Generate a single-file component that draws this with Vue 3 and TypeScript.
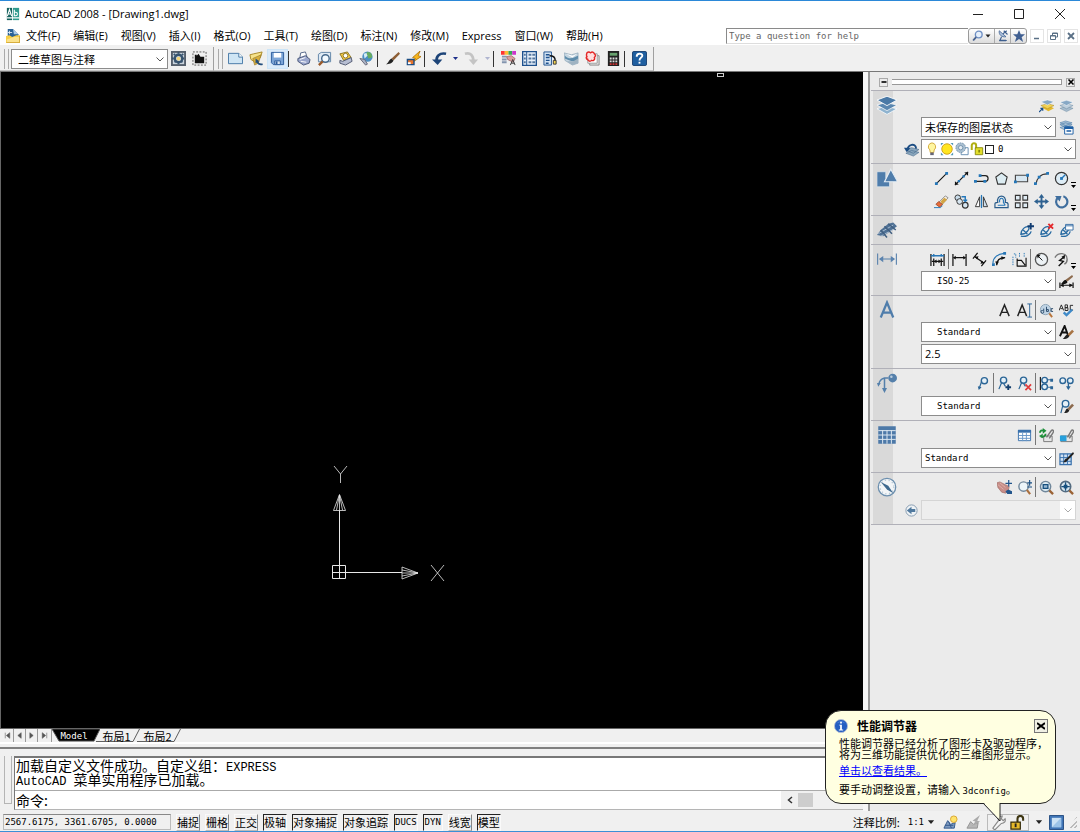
<script setup lang="ts">
import { ref } from 'vue'

interface Tool {
  id: string
  label: string
  sep?: boolean
}

const menus: string[] = [
  '文件(F)', '编辑(E)', '视图(V)', '插入(I)', '格式(O)', '工具(T)',
  '绘图(D)', '标注(N)', '修改(M)', 'Express', '窗口(W)', '帮助(H)',
]

const icons: Record<string, string> = {
  logo: '<path fill="#16635f" d="M1 1h6v14H1z"/><path fill="#2f9a8d" d="M8 1h7v14H8z"/><path stroke="#fff" stroke-width="1.3" fill="none" d="M1.5 10.500L4 3l2.500 7.500M2.500 8H6M9.500 3v7h1.500a2 2 0 0 0 0-4H9.500M1 12.500h14"/>',
  dwg: '<path fill="#2a6296" d="M2 0h6l6 6v4H2z"/><path fill="#a9c9e6" d="M8 0l6 6H9z"/><path stroke="#dfeaf5" d="M4 2v4M2 4h5"/><path fill="#f7cf47" d="M0 8l4-1 3 2 5-2h4v9H0z"/><path fill="#fbe28b" d="M1 12l8-3h6v6H1z"/><path fill="none" stroke="#c0922a" stroke-width=".7" d="M.5 15.500h15V8"/>',
  gear: '<path fill="#555f6c" d="M0 0h16v16H0z"/><path fill="#c9d3dc" d="M2 2h12v12H2z"/><circle cx="8" cy="8" r="4" fill="none" stroke="#37536e" stroke-width="2.500"/><path stroke="#37536e" stroke-width="2" stroke-dasharray="2 9" d="M8 1v14M1 8h14M3 3l10 10M13 3L3 13"/><circle cx="8" cy="8" r="2" fill="#f3d679"/>',
  mywork: '<path fill="none" stroke="#555" stroke-dasharray="2 1.500" d="M1 1h14v14H1z"/><path fill="#111" d="M3 7V4h2v1l2-2 2 3h4v7H3z"/>',
  newdoc: '<path fill="#cfe5f4" stroke="#4577a5" d="M.5 2.500h11l4 4v7H.5z"/><path fill="#fff" stroke="#4577a5" d="M11.500 2.500v4h4"/>',
  open: '<path fill="#f6e28a" stroke="#a98728" d="M1 4l4-1 9-2-2 6-5 5-5-3z"/><path fill="#d6ae3e" stroke="#8f6f1c" stroke-width=".6" d="M4 8l9-4-3 9-4 2z"/><path fill="none" stroke="#234e7d" stroke-width="1.800" d="M14.500 14c-3 1-5-1-6-3"/><path fill="#234e7d" d="M7 13V8l4 3z"/>',
  save: '<path fill="#7ba4d6" stroke="#2b5b9c" d="M1.500 1.500h13v13h-11l-2-2z"/><path fill="#fff" d="M4 2h8v5H4z"/><path fill="#dbe8f6" stroke="#2b5b9c" d="M5 10.500h6v4H5z"/><path fill="#2b5b9c" d="M6 11h2v3H6z"/>',
  print: '<path fill="#fff" stroke="#56698a" d="M4 8l1-6 5-1 2 6"/><path fill="#9aa6cc" stroke="#475577" d="M2 8l8-3 5 4-1 4-6 2-6-4z"/><path fill="none" stroke="#fff" d="M4 9l6-2M5 11l6 1"/>',
  preview: '<path fill="#dfeaf4" stroke="#5f83a6" d="M1.500 3.500l3-2h10v10h-13z"/><circle cx="9" cy="8" r="4" fill="#f3faff" stroke="#46698c" stroke-width="1.500"/><path stroke="#9a5a2a" stroke-width="2.500" d="M6 11l-4 4"/>',
  publish: '<path fill="#f1c946" stroke="#8e7420" d="M2 3l8-2 4 6-8 3z"/><circle cx="8" cy="5" r="2.500" fill="#fff" stroke="#8e7420"/><path fill="#b7bed2" stroke="#4f5870" d="M2 10l3 1 9-4 1 4-7 4-6-2z"/>',
  globe: '<circle cx="9" cy="6" r="5.500" fill="#4a8fc4"/><path fill="#67ac60" d="M9 1c5 0 5 4 5 6l-4 1-1-3-2-2z"/><path fill="#d5ecf8" d="M5 3l3-1 1 3-3 3z"/><path fill="#aab3c6" stroke="#667" d="M1 8l5 1 3 5-2 1z"/>',
  brush: '<path fill="#8d5e35" d="M14.500 1L16 3l-7 7-2-2z"/><path fill="#222" d="M7 8l2 2c-1 3-5 4-8 4 3-1 3-5 6-6z"/>',
  bolt: '<path fill="#f7b61c" stroke="#a56a00" stroke-width=".8" d="M15 0L7 7l3 1-3 4 9-6-3-1z"/><path fill="#e9752c" stroke="#1c4d83" stroke-width="1.500" d="M1.500 9h7v5.500h-7z"/><path fill="#fff" d="M2 12h3v2H2z"/>',
  undo: '<path fill="none" stroke="#1d4478" stroke-width="2.800" d="M5 11C4 6 8 1.500 15 3"/><path fill="#1d4478" d="M0 9h11l-5 6z"/>',
  redo: '<path fill="none" stroke="#c4c4c4" stroke-width="2.800" d="M1 3c6-2 9 2 9 8"/><path fill="#c4c4c4" d="M5 9h10l-5 6z"/>',
  props: '<path fill="#f33" d="M0 0h4v4H0z"/><path fill="#fb3" d="M4 0h4v4H4z"/><path fill="#3a5" d="M8 0h4v4H8z"/><path fill="#c3c" d="M12 0h4v4h-4z"/><path stroke="#8394ae" stroke-width="2" d="M1 6h5M1 9h5M1 12h5"/><path fill="#d9a0a0" stroke="#8e5050" stroke-width=".7" d="M6 6l5-1 4 3-2 4-6-3z"/><path fill="none" stroke="#333" d="M10 15l2.500-6 2.500 6M11 13h3"/>',
  dcenter: '<path fill="#e7f0fa" stroke="#1e518e" stroke-width="1.500" d="M.7.7h14.600v14.600H.7z"/><path fill="none" stroke="#1e518e" d="M5 1v14"/><path fill="#54779f" d="M2 3h2v2H2zM2 7h2v2H2zM2 11h2v2H2zM7 3h3v2H7zM11 3h3v2h-3zM7 7h3v2H7zM11 7h3v2h-3zM7 11h3v2H7zM11 11h3v2h-3z"/>',
  palette: '<path fill="#d4e4f4" stroke="#1e518e" d="M1 1h8v14H1z"/><path stroke="#1e518e" stroke-width="1.500" d="M3 4h4M3 7h4M3 10h4M3 13h3"/><path fill="none" stroke="#111" stroke-width="1.500" d="M7 5c5 0 6 2 6 5"/><path fill="#f1d24e" stroke="#333" d="M11 10h3v4h-3z"/>',
  sheets: '<path fill="#c4d4df" stroke="#8ba3b5" stroke-width=".7" d="M0 2l8 2 7-2v11l-6 2-8-5z"/><path fill="#5e8cab" d="M1 5c5 5 9 2 14 0v4c-5 4-9 1-14-1z"/><path fill="#fff" d="M2 3l7 2 5-2-5 4z"/><path fill="#9fb3c2" d="M3 11l7 0 5-3v5l-6 2z"/>',
  markup: '<path fill="#e7e7e7" stroke="#888" d="M5 5h10v10H5z"/><path fill="#fff" stroke="#999" d="M3 3h10v10H3z"/><path fill="#ffdede" stroke="#e32626" stroke-width="1.500" d="M2 2c2-2 3-1 4 0 2-2 4 0 4 1 2 1 1 3 0 4 1 2-1 4-3 3-2 2-4 0-4-1-2 0-2-3-1-3-1-2 0-3 0-4z"/>',
  calc: '<path fill="#222" d="M2 0h12v16H2z"/><path fill="#67a16d" d="M4 2h8v3H4z"/><path stroke="#ddd" stroke-width="2" stroke-dasharray="2 1" d="M4 8h8M4 11h8"/><path stroke="#c33" stroke-width="2" stroke-dasharray="2 1" d="M4 14h8"/>',
  help: '<rect x=".5" y=".5" width="15" height="15" rx="1.500" fill="#1f5fa0" stroke="#173f70"/><path fill="none" stroke="#fff" stroke-width="2" d="M5 6c0-4 6-4 6-1 0 2-3 2-3 5"/><path fill="#fff" d="M7 11.500h2v2H7z"/>',
  search: '<circle cx="9" cy="6" r="4.500" fill="#e5effb" stroke="#6d8ec3" stroke-width="1.800"/><path stroke="#48628f" stroke-width="2.500" d="M5.500 9.500L1.500 14"/>',
  satellite: '<path fill="#a8bedb" stroke="#3e5f8f" d="M3 1c-1 5 3 9 9 8z"/><path fill="none" stroke="#3e5f8f" stroke-width="1.500" d="M8 5l5-4M9 1l5 5M6 9l-2 5h9"/><path fill="#3e5f8f" d="M3 13h9v2H3z"/>',
  star: '<path fill="#405f91" d="M8 0l2.300 5.500H16L11.500 9.500 13.500 16 8 12l-5.500 4 2-6.500L0 5.500h5.700z"/>',
  layers: '<path fill="#8fb3cf" stroke="#fff" stroke-width=".6" d="M0 11l7-2 9 2-8 4.500z"/><path fill="#5b87b0" stroke="#fff" stroke-width=".6" d="M0 8l7-2 9 2-8 4.500z"/><path fill="#4a79a6" stroke="#fff" stroke-width=".7" d="M0 4l8-3 8 3-8 4.500z"/>',
  layercur: '<path fill="#e4b92d" d="M3 10l7-2 6 3-6 3z"/><path fill="#f2d252" stroke="#a8821c" stroke-width=".5" d="M2 8l7-2 7 2-7 3.500z"/><path fill="#86a8c5" stroke="#fff" stroke-width=".5" d="M2 4l7-2 7 2-7 3.500z"/><path fill="none" stroke="#174f8d" stroke-width="1.300" d="M0 15l4-4M1.500 11H4v2.500"/>',
  layerlight: '<path fill="#a6bccd" stroke="#65859e" stroke-width=".5" d="M1 11l7-2 7 2-7 3.500z"/><path fill="#bfd0dd" stroke="#65859e" stroke-width=".5" d="M1 8l7-2 7 2-7 3.500z"/><path fill="#86a8c5" stroke="#fff" stroke-width=".5" d="M1 4.500l7-2 7 2L8 8z"/>',
  layerstate: '<path fill="#a6c0d6" stroke="#4a7ba8" stroke-width=".6" d="M1 8l6-2 7 2-7 3zM1 5l6-2 7 2-7 3zM1 3l6-2 7 2-7 3z"/><path fill="#fff" stroke="#1d5fa5" d="M6 7.500h9v7.500H6z"/><path fill="#1d5fa5" d="M6 7h9v2.500H6zM8 11h5v1.500H8z"/>',
  layerprev: '<path fill="#89a6bd" stroke="#46688a" stroke-width=".6" d="M2 12l6-3 8 2-6 4zM2 9l6-3 8 2-6 4z"/><path fill="none" stroke="#1c4d83" stroke-width="2" d="M4 8c0-5 8-8 9-1"/><path fill="#1c4d83" d="M0 6h7L3 11z"/>',
  bulb: '<path fill="#fff6a0" stroke="#d0a32f" d="M8 1a4.500 4.500 0 0 1 2.500 8L10 12H6l-.5-3A4.500 4.500 0 0 1 8 1z"/><path fill="#667" d="M6 12h4v3H6z"/>',
  sun: '<path fill="#4f96b6" d="M1 1h3L1 4zM15 1v3l-3-3zM1 15v-3l3 3zM15 15h-3l3-3z"/><circle cx="8" cy="8" r="6" fill="#ffe51f" stroke="#c99a19"/>',
  vpfreeze: '<path fill="#fff" stroke="#5b86ad" d="M7 6.500h8v8H7z"/><circle cx="6.500" cy="6.500" r="5.500" fill="#a9bfd1" stroke="#6d8da8" stroke-dasharray="2 1"/><circle cx="6.500" cy="6.500" r="2.500" fill="#e3ebf1" stroke="#6d8da8"/>',
  lock: '<path fill="none" stroke="#b0ae12" stroke-width="2.300" d="M2 9V4a2.500 2.500 0 0 1 5 0v4"/><path fill="#e3df2b" stroke="#85850a" d="M6 6.500h8.500v8H6z"/><path fill="#85850a" d="M9.500 9h2v3h-2z"/>',
  draw: '<path fill="#4f7dab" stroke="#e4edf5" stroke-width=".5" d="M0 3h7v5l3 3v4H0z"/><path fill="#4f7dab" stroke="#e4edf5" stroke-width=".9" d="M11 1l5.500 10H6z"/>',
  line: '<path stroke="#111" stroke-width="1.200" d="M2 14L14 2"/><path fill="#2477b9" d="M1 12h3v3H1zM12 1h3v3h-3z"/>',
  xline: '<path stroke="#111" stroke-width="1.200" d="M1 15L15 1"/><path fill="#111" d="M15 1v4l-4-3.500zM1 15v-4l4 3.500z"/><path fill="#2477b9" d="M4 9.500h2.500V12H4zM9 4.500h2.500V7H9z"/>',
  pline: '<path fill="none" stroke="#222" stroke-width="1.300" d="M2 11h10a3 3 0 0 0 0-6H7"/><path fill="#2477b9" d="M0 9.500h3v3H0zM10 9.500h3v3h-3zM5 3.500h3v3H5z"/>',
  polygon: '<path fill="#dcecf2" stroke="#333" stroke-width="1.200" d="M8 2l6 4.500L12 14H4L2 6.500z"/>',
  rect: '<path fill="#d8e7f1" stroke="#444" stroke-width="1.200" d="M1.500 4.500h13v7h-13z"/><path fill="#2477b9" d="M0 10h3v3H0zM13 3h3v3h-3z"/>',
  arc: '<path fill="none" stroke="#333" stroke-width="1.200" d="M2 14C3 8 7 3 14 3"/><path fill="#2477b9" d="M0 12h3v3H0zM4 5h3v3H4zM13 1h3v3h-3z"/>',
  circle: '<circle cx="8" cy="8" r="6.500" fill="#deedf6" stroke="#333" stroke-width="1.300"/><path stroke="#2477b9" stroke-width="1.500" d="M8 8l4-4"/><path fill="#2477b9" d="M6.500 6.500h3v3h-3z"/>',
  erase: '<path fill="#f5eee3" stroke="#777" stroke-width=".8" d="M5 9l7-7 3 2-8 9z"/><path fill="#d2a544" d="M7 8l4-4 3 2-5 5z"/><path fill="#e86c3a" stroke="#8d4327" stroke-width=".8" d="M2 11l3-3 4 3-3 3z"/><path fill="none" stroke="#2477b9" d="M0 14.500h7l2-2"/>',
  copy: '<circle cx="4" cy="4" r="3" fill="#c9dcea" stroke="#333"/><circle cx="6" cy="8" r="3" fill="#d7e6f1" stroke="#333"/><circle cx="12" cy="12" r="3" fill="#d7e6f1" stroke="#333" stroke-width="1.300"/><path fill="none" stroke="#2477b9" stroke-width="1.500" d="M8 3h4v4M10 6l2 2 2-2"/>',
  mirror: '<path fill="#fff" stroke="#333" d="M1.500 13.500L6 3v10.500z"/><path fill="#cde0ef" stroke="#333" d="M14.500 13.500L10 3v10.500z"/><path stroke="#2477b9" stroke-width="1.300" d="M8 1v14"/>',
  offset: '<path fill="none" stroke="#2b5d8b" stroke-width="1.300" d="M1 14.500h14V11c0-2-2-2-3-2 2-9-10-9-8 0-3 0-3 1-3 2z"/><path fill="none" stroke="#2477b9" stroke-width="1.200" d="M4 12h8M6 9c-1-6 5-6 4 0l2 3"/>',
  array: '<path fill="#dfebf3" stroke="#333" stroke-width="1.200" d="M1.500 1.500h5v5h-5zM9.500 1.500h5v5h-5zM1.500 9.500h5v5h-5zM9.500 9.500h5v5h-5z"/>',
  move: '<path stroke="#2e6190" stroke-width="2" d="M8 3v10M3 8h10"/><path fill="#2e6190" d="M8 0l3 4H5zM8 16l-3-4h6zM0 8l4-3v6zM16 8l-4 3V5z"/>',
  rotate: '<path fill="none" stroke="#3f6e9e" stroke-width="2.300" d="M10 2.500A6 6 0 1 1 4 4"/><path fill="#3f6e9e" d="M1 2h7l-2 6z"/>',
  blocks: '<path fill="#4f7195" d="M0 12l3-4 6-5 4-1 3 3-4 3-7 5z"/><path stroke="#a9bdd0" stroke-width=".8" d="M1 11l12-7M3 13l11-6"/><path stroke="#405f80" stroke-width="1.200" d="M6 5l6 6M9 3l6 5M3 8l5 6"/>',
  attadd: '<path fill="none" stroke="#286ba2" stroke-width="1.400" d="M2 12c0-5 5-9 8-8 2 2-2 8-8 8zm0 2c5 1 10-1 11-5M4 7l5 5"/><path stroke="#123d72" stroke-width="2" d="M12.500 0v7M9 3.500h7"/>',
  attdel: '<path fill="none" stroke="#286ba2" stroke-width="1.400" d="M2 12c0-5 5-9 8-8 2 2-2 8-8 8zm0 2c5 1 10-1 11-5M4 7l5 5"/><path stroke="#e3282b" stroke-width="2" d="M10 1l5 5M15 1l-5 5"/>',
  attedit: '<path fill="none" stroke="#286ba2" stroke-width="1.400" d="M2 12c0-5 5-9 8-8 2 2-2 8-8 8zm0 2c5 1 9-1 10-5M4 7l5 5"/><path fill="#fff" stroke="#396fa5" d="M7 1.500h8v6H7z"/><path stroke="#396fa5" d="M7 3h8"/>',
  dim: '<path fill="none" stroke="#5b83ae" stroke-width=".9" d="M.5 3.500v9M15.500 3.500v9M3 8h10"/><path fill="#5b83ae" d="M1.500 8L5 5.500v5zM14.500 8L11 10.500v-5z"/>',
  dimquick: '<path stroke="#111" stroke-width="1.300" d="M1 2v13M15 2v13M4 7v8M12 7v8M2 10h12"/><path stroke="#2977b6" stroke-width="1.500" d="M1 4h14M4 2v3M12 2v3"/><path fill="#111" d="M4 10l3-2v4zM12 10l-3 2V8z"/>',
  dimlin: '<path stroke="#111" stroke-width="1.300" d="M1 2v13M15 2v13M2 6h12"/><path fill="#111" d="M1 6l3-2v4zM15 6l-3 2V4z"/>',
  dimali: '<path fill="none" stroke="#111" stroke-width="1.300" d="M3 5l10 7M1 7l5-6M10 15l5-6"/><path fill="#111" d="M3 5l4-.5L5.500 8zM13 12l-4 .5L10.500 9z"/>',
  dimarc: '<path fill="none" stroke="#111" stroke-width="1.300" d="M5 14c0-5 3-8 9-8"/><path fill="none" stroke="#2977b6" stroke-width="1.200" d="M1 12C1 6 6 2 13 1.500"/><path fill="#2977b6" d="M12 0h3v3h-3zM0 12h3v3H0z"/><path fill="#111" d="M14 6l-4-1.500v4zM5 14L3.500 10h4z"/>',
  dimord: '<path fill="none" stroke="#111" stroke-width="1.200" d="M5 15h10V6M5.500 15V7M6 9h4l4 5"/><path fill="none" stroke="#2977b6" stroke-dasharray="1.500 1" d="M1 5v10M2 2h2v4M8 1v4M13 1v4"/>',
  radius: '<circle cx="8" cy="8" r="6.500" fill="#edf2f5" stroke="#555" stroke-width="1.400"/><path stroke="#111" d="M9 9L4 4"/><path fill="#111" d="M3 3h4L4 7z"/>',
  jog: '<path fill="none" stroke="#777" stroke-width="1.500" d="M1 6C4 0 14 0 14 8c0 2-1 4-3 5"/><path fill="none" stroke="#111" stroke-width="1.500" d="M11 5L6 9l4 1-5 5"/><path fill="#111" d="M12 3l-1 5-3-3z"/>',
  dimstyle: '<path stroke="#111" stroke-width="1.300" d="M1 9v6M15 9v6M2 12h12"/><path fill="#111" d="M1 12l4-2v4zM15 12l-4 2v-4zM2 10c2 0 2-4 6-4l1 3c-2 2-5 2-7 1z"/><path fill="#8d6b4e" d="M14 1l1 2-6 5-2-2z"/>',
  bigA: '<path fill="none" stroke="#4f7dab" stroke-width="1.800" d="M3 14L8 2l5 12M4.500 10h7"/>',
  textA: '<path fill="none" stroke="#222" stroke-width="1.500" d="M3 14L8 2l5 12M4.500 10h7"/>',
  textAI: '<path fill="none" stroke="#222" stroke-width="1.500" d="M.7 14L5.500 2l4.800 12M2.500 10h6"/><path fill="none" stroke="#2b6398" d="M11 1h5M13.500 1v14M11 15h5"/>',
  find: '<circle cx="7" cy="7" r="5.500" fill="#bfd3e4" stroke="#8ba1b4"/><path fill="none" stroke="#29496a" d="M4 8a1.500 1.500 0 1 0 1 1V6M8 4v5h2V7H8M15 6h-2v3h2"/><path stroke="#b8743a" stroke-width="2" d="M11 11l3 4"/>',
  spell: '<path fill="none" stroke="#222" d="M0 8l2.500-6L5 8M1.500 6h2.500M6.500 2v6h3V5h-3 2.500V2H6.500M15 2.500h-3v5h3"/><path fill="none" stroke="#3f8ac8" stroke-width="2.500" d="M5 10l3 3 6-6"/>',
  textstyle: '<path fill="none" stroke="#111" stroke-width="2" d="M1 12L6 1l4 11M3 8h6"/><path fill="#a77343" d="M14 5l2 2-5 5-2-2z"/><path fill="#222" d="M9 10l2 2c-2 3-5 3-7 3 2-2 3-5 5-5z"/>',
  leaderBig: '<circle cx="12.500" cy="4" r="3.500" fill="#5580ab"/><circle cx="11.500" cy="3" r="1" fill="#bcd"/><path fill="none" stroke="#5580ab" stroke-width="1.200" d="M9 4H6Q2 5 1.500 9M6 4v10"/><path fill="#5580ab" d="M0 8h3l-2 3zM4 12h4l-2 4z"/>',
  leader: '<circle cx="10" cy="5" r="3.300" fill="#e5f0f7" stroke="#2b6596" stroke-width="1.500"/><path fill="none" stroke="#2b6596" stroke-width="1.300" d="M7 6L4.500 13"/><path fill="#2b6596" d="M3 11l4 1-3 3z"/>',
  leaderadd: '<circle cx="7" cy="4.500" r="3.300" fill="#e5f0f7" stroke="#2b6596" stroke-width="1.500"/><path fill="none" stroke="#2b6596" stroke-width="1.300" d="M5 7l-3 7M7 8l2 3"/><path stroke="#143f6d" stroke-width="2" d="M12 9v6M9 12h6"/>',
  leaderdel: '<circle cx="7" cy="4.500" r="3.300" fill="#e5f0f7" stroke="#2b6596" stroke-width="1.500"/><path fill="none" stroke="#2b6596" stroke-width="1.300" d="M5 7l-3 7M7 8l2 3"/><path stroke="#e13b3b" stroke-width="1.800" d="M9 9l6 6M15 9l-6 6"/>',
  leaderalign: '<path stroke="#222" stroke-width="1.300" d="M1.500 1v14"/><circle cx="6" cy="4.500" r="3" fill="#e5f0f7" stroke="#2b6596" stroke-width="1.500"/><circle cx="6" cy="11.500" r="3" fill="#e5f0f7" stroke="#2b6596" stroke-width="1.500"/><path stroke="#2b6596" d="M9 4h5M9 12h5"/><path fill="#2b6596" d="M12 3h3v3h-3zM12 11h3v3h-3z"/>',
  leadercol: '<circle cx="4" cy="5" r="3" fill="#e5f0f7" stroke="#2b6596" stroke-width="1.500"/><circle cx="12" cy="5" r="3" fill="#e5f0f7" stroke="#2b6596" stroke-width="1.500"/><path stroke="#2b6596" stroke-width="1.400" d="M10 8v6"/><path fill="#2b6596" d="M7.500 11h5L10 15z"/>',
  leaderstyle: '<circle cx="7" cy="5" r="3.500" fill="#e5f0f7" stroke="#2b6596" stroke-width="1.500"/><path stroke="#2b6596" stroke-width="1.300" d="M4 7l-2 8"/><path fill="#8d6b4e" d="M14 5l2 2-5 5-2-2z"/><path fill="#222" d="M9 10l2 2c-1 3-4 3-6 3 2-1 2-5 4-5z"/>',
  tableBig: '<path fill="#4d79a8" d="M1 1h14v14H1z"/><path stroke="#dbe6f0" stroke-width=".8" d="M1 4.500h14M1 8h14M1 11.500h14M4.500 4v11M8 4v11M11.500 4v11"/>',
  table: '<path fill="#fff" stroke="#3971ad" d="M1.500 2.500h13v11h-13z"/><path fill="#3971ad" d="M1 2h14v3H1z"/><path stroke="#6a98c9" d="M2 8h12M2 11h12M6 5v9M10 5v9"/>',
  linkupd: '<path fill="#e6e6e6" stroke="#777" d="M5 8.500h9v6H5z"/><path fill="none" stroke="#777" stroke-width="1.500" d="M8 10l5-7c2-2 3 0 2 2l-4 6"/><path fill="none" stroke="#1e8f3a" stroke-width="2" d="M1 5c0-2 2-3 4-2M2 9c2 1 5 0 5-3"/><path fill="#1e8f3a" d="M4 0l4 3-4 3zM4 6v5L0 8.500z"/>',
  linkdl: '<path fill="#e6e6e6" stroke="#777" d="M2 8.500h12v6H2z"/><path fill="#27a0dc" d="M1 8h7v6H1z"/><path fill="none" stroke="#777" stroke-width="1.500" d="M9 10l4-7c2-2 3 0 2 2l-4 6"/>',
  tablestyle: '<path fill="#cfe0f2" stroke="#3971ad" stroke-width="1.300" d="M1 3h12v11.500H1z"/><path stroke="#3971ad" d="M1 7h12M1 11h12M5 3v11M9 3v11"/><path fill="#222" d="M15 1l1 2-7 7c-1 2-3 2-5 2 2-1 2-4 4-4z"/>',
  compass: '<circle cx="8" cy="8" r="7" fill="#f2f5f7" stroke="#6c8fae"/><circle cx="8" cy="8" r="5.500" fill="none" stroke="#b6c7d5" stroke-dasharray="1 2"/><path fill="#3e698f" d="M3 4l6 3 4 6-5-3z"/>',
  pan: '<path fill="#c78d88" stroke="#976059" stroke-width=".6" d="M0 3l3-1 6 3 4 2-1 5-3 2-4-1-4-5z"/><path stroke="#deb0aa" d="M1 5l6 5M3 3l6 5"/><path stroke="#22558c" stroke-width="1.300" d="M12.500 0v7M9 3.500h7"/><path fill="#22558c" d="M9 12l3-2 4 2v3h-5z"/>',
  zoomrt: '<circle cx="7" cy="7" r="5" fill="#edf5f9" stroke="#70879b" stroke-width="1.500"/><path stroke="#aa7040" stroke-width="2.300" d="M10.500 10.500L14 15"/><path stroke="#174e83" stroke-width="1.200" d="M11 3h5M13.500 0v6M11 7.500h5"/>',
  zoomwin: '<circle cx="7" cy="7" r="5.500" fill="#dceaf1" stroke="#70879b" stroke-width="1.500"/><path fill="#99b8d2" stroke="#17507f" stroke-width="1.400" d="M4.500 5h5v4h-5z"/><path stroke="#9b6336" stroke-width="2.500" d="M11 11l4 4"/>',
  zoomext: '<circle cx="7" cy="7" r="5.500" fill="#dceaf1" stroke="#536b80" stroke-width="1.700"/><path stroke="#17507f" stroke-width="1.400" d="M7 2.500v9M2.500 7h9"/><path fill="#17507f" d="M5 5h4v4H5z"/><path stroke="#9b6336" stroke-width="2.500" d="M11 11l4 4"/>',
  back: '<circle cx="8" cy="8" r="6" fill="#eef2f5" stroke="#8299ae"/><path fill="#50799e" d="M3 8l5-4v2.500h4v3H8V12z"/>',
  annvis: '<path fill="#7e9bc0" stroke="#32588c" d="M1 14l4-8 3 4 5-2-1 6z"/><path fill="none" stroke="#32588c" d="M2 11h9M6 7l3 7"/><circle cx="11.500" cy="4.500" r="3.500" fill="#ffe36b" stroke="#d6a431"/>',
  annauto: '<path fill="#b7b7b7" stroke="#929292" d="M1 14l4-7 3 3 5-2-1 6z"/><path fill="#aaa" d="M15 0L7 6l3 1-4 5 9-5-3-1z"/>',
  wrench: '<path fill="#f5f5f5" stroke="#888" stroke-width="1.200" d="M2 14l6-8c-1-3 1-5 4-5l-1 3 2 2 2-2c1 3-1 5-4 5l-7 7z"/>',
  padlock: '<path fill="none" stroke="#3d3510" stroke-width="2.200" d="M8 8V4c0-4 6-4 6 0v2"/><path fill="#e5b92b" stroke="#342c0b" stroke-width="1.300" d="M1 7.500h10v7.500H1z"/><path fill="#222" d="M5 9h2v4H5z"/>',
  clean: '<path fill="#3f75b7" stroke="#234b80" d="M.5.5h15v15H.5z"/><path fill="#cce2f5" d="M3 3h10v10H3z"/><path fill="#9cc3e8" d="M3 13L13 3v10z"/>',
  info: '<circle cx="8" cy="8" r="7.500" fill="#245ec2" stroke="#b6bfd2"/><path fill="#7ba6ee" d="M3 5a6 5 0 0 1 10 0 8 6 0 0 0-10 0z"/><path fill="#fff" d="M7 3h2v2H7zM6 6.500h3V12h1.500v1h-5v-1H7V7.500H6z"/>',
  tiny: '<path fill="#222" d="M3 5h10l-5 6z"/>',
}

const fileTools: Tool[][] = [
  [
    { id: 'newdoc', label: '新建' },
    { id: 'open', label: '打开' },
    { id: 'save', label: '保存' },
  ],
  [
    { id: 'print', label: '打印' },
    { id: 'preview', label: '打印预览' },
    { id: 'publish', label: '发布' },
    { id: 'globe', label: '三维 DWF' },
  ],
  [
    { id: 'brush', label: '特性匹配' },
    { id: 'bolt', label: '块编辑器' },
  ],
  [
    { id: 'undo', label: '放弃' },
    { id: 'redo', label: '重做' },
  ],
  [
    { id: 'props', label: '特性' },
    { id: 'dcenter', label: '设计中心' },
    { id: 'palette', label: '工具选项板' },
    { id: 'sheets', label: '图纸集管理器' },
    { id: 'markup', label: '标记集管理器' },
    { id: 'calc', label: '快速计算器' },
  ],
  [{ id: 'help', label: '帮助' }],
]

interface Panel {
  id: string
  emblem: string
  tight?: boolean
  rows: { more?: boolean; tools: Tool[] }[]
}

const t = (id: string, label: string, sep = false): Tool => ({ id, label, sep })

const panels: Panel[] = [
  { id: 'layer', emblem: 'layers', tight: true, rows: [{ tools: [t('layercur', '置为当前'), t('layerlight', '图层特性')] }] },
  {
    id: 'draw',
    emblem: 'draw',
    rows: [
      { more: true, tools: [t('line', '直线'), t('xline', '构造线'), t('pline', '多段线'), t('polygon', '正多边形'), t('rect', '矩形'), t('arc', '圆弧'), t('circle', '圆')] },
      { more: true, tools: [t('erase', '删除'), t('copy', '复制'), t('mirror', '镜像'), t('offset', '偏移'), t('array', '阵列'), t('move', '移动'), t('rotate', '旋转')] },
    ],
  },
  { id: 'scale', emblem: 'blocks', rows: [{ tools: [t('attadd', '添加比例'), t('attdel', '删除比例'), t('attedit', '编辑比例')] }] },
  {
    id: 'dim',
    emblem: 'dim',
    tight: true,
    rows: [{ more: true, tools: [t('dimquick', '快速标注'), t('dimlin', '线性', true), t('dimali', '对齐'), t('dimarc', '弧长'), t('dimord', '坐标'), t('radius', '半径', true), t('jog', '折弯')] }],
  },
  { id: 'text', emblem: 'bigA', tight: true, rows: [{ tools: [t('textA', '单行文字'), t('textAI', '多行文字'), t('find', '查找', true), t('spell', '拼写检查')] }] },
  { id: 'leader', emblem: 'leaderBig', rows: [{ tools: [t('leader', '多重引线'), t('leaderadd', '添加引线', true), t('leaderdel', '删除引线'), t('leaderalign', '对齐', true), t('leadercol', '合并')] }] },
  { id: 'table', emblem: 'tableBig', rows: [{ tools: [t('table', '表格'), t('linkupd', '更新数据链接', true), t('linkdl', '数据链接')] }] },
  { id: 'nav', emblem: 'compass', rows: [{ tools: [t('pan', '平移'), t('zoomrt', '实时缩放'), t('zoomwin', '窗口缩放', true), t('zoomext', '范围缩放')] }] },
]

const styleCombos: Record<string, { value: string; icon: string; indent: boolean }> = {
  dim: { value: 'ISO-25', icon: 'dimstyle', indent: true },
  text: { value: 'Standard', icon: 'textstyle', indent: true },
  leader: { value: 'Standard', icon: 'leaderstyle', indent: true },
  table: { value: 'Standard', icon: 'tablestyle', indent: false },
}

const toggles = ref([
  { name: '捕捉', on: false },
  { name: '栅格', on: false },
  { name: '正交', on: false },
  { name: '极轴', on: true },
  { name: '对象捕捉', on: true },
  { name: '对象追踪', on: true },
  { name: 'DUCS', on: true },
  { name: 'DYN', on: true },
  { name: '线宽', on: false },
  { name: '模型', on: true },
])

const navs: string[] = [
  'M4 3v10M12 3L6 8l6 5z',
  'M11 3L5 8l6 5z',
  'M5 3l6 5-6 5z',
  'M12 3v10M4 3l6 5-6 5z',
]

const query = ref('')
const command = ref('')
const balloonOpen = ref(true)
</script>

<template>
  <div class="window">
    <header class="titlebar">
      <svg class="ic" viewBox="0 0 16 16" aria-hidden="true" v-html="icons.logo"></svg>
      <h1>AutoCAD 2008 - [Drawing1.dwg]</h1>
      <div class="caption">
        <button aria-label="最小化"><svg viewBox="0 0 10 10"><path d="M0 5.500h10" /></svg></button>
        <button aria-label="最大化"><svg viewBox="0 0 10 10"><path d="M.5.5h9v9h-9z" /></svg></button>
        <button aria-label="关闭"><svg viewBox="0 0 10 10"><path d="M0 0l10 10M10 0L0 10" /></svg></button>
      </div>
    </header>

    <div class="menubar">
      <svg class="ic" viewBox="0 0 16 16" aria-hidden="true" v-html="icons.dwg"></svg>
      <nav class="menus">
        <button v-for="m in menus" :key="m">{{ m }}</button>
      </nav>
      <input v-model="query" class="ask" type="text" placeholder="Type a question for help" aria-label="帮助搜索" />
      <div class="infocenter">
        <button class="wide" aria-label="搜索">
          <svg class="ic" viewBox="0 0 16 16" v-html="icons.search"></svg>
          <svg class="drop" viewBox="0 0 16 16" v-html="icons.tiny"></svg>
        </button>
        <button aria-label="通讯中心"><svg class="ic" viewBox="0 0 16 16" v-html="icons.satellite"></svg></button>
        <button aria-label="收藏夹"><svg class="ic" viewBox="0 0 16 16" v-html="icons.star"></svg></button>
      </div>
      <div class="mdi">
        <button aria-label="最小化图形"><svg viewBox="0 0 8 8"><path stroke-width="1.500" d="M1 6.500h5" /></svg></button>
        <button aria-label="还原图形"><svg viewBox="0 0 8 8"><path d="M2.500 3V1h5v4h-2M.5 3.500h5v4h-5zM.5 4h5M2.500 1.500h5" /></svg></button>
        <button aria-label="关闭图形"><svg viewBox="0 0 8 8"><path stroke-width="1.800" d="M1 1l6 6M7 1L1 7" /></svg></button>
      </div>
    </div>

    <div class="toolbars">
      <div class="bar">
        <span class="grip"></span>
        <div class="combo workspace">
          <select aria-label="工作空间"><option>二维草图与注释</option></select>
          <svg class="chev" viewBox="0 0 8 5"><path d="M.5.5L4 4 7.500.5" /></svg>
        </div>
        <button class="tool" aria-label="工作空间设置"><svg class="ic" viewBox="0 0 16 16" v-html="icons.gear"></svg></button>
        <button class="tool" aria-label="我的工作空间"><svg class="ic" viewBox="0 0 16 16" v-html="icons.mywork"></svg></button>
      </div>
      <div class="bar">
        <span class="grip"></span>
        <div v-for="(group, i) in fileTools" :key="i" class="group">
          <template v-for="tool in group" :key="tool.id">
            <button class="tool" :class="{ hot: tool.id === 'save' }" :aria-label="tool.label">
              <svg class="ic" viewBox="0 0 16 16" v-html="icons[tool.id]"></svg>
            </button>
            <button v-if="i === 3" class="tool-drop" :class="{ dim: tool.id === 'redo' }" :aria-label="tool.label + '列表'">
              <svg viewBox="0 0 5 3"><path d="M0 0h5L2.500 3z" /></svg>
            </button>
          </template>
        </div>
      </div>
    </div>

    <div class="workspace-area">
      <main class="left">
        <div class="canvas">
          <span class="handle"></span>
          <svg class="ucs" viewBox="0 0 114 118" aria-label="UCS">
            <g fill="none" stroke="#e8e8e8">
              <path d="M1.500 101.500h13v13h-13zM8.500 46v69M1 108.500h70" />
              <path stroke-width=".8" d="M8.500 30.500L2.500 46.500h12zM8.500 31L5.500 46M8.500 31v15M8.500 31l3 15M87 109l-16-6v12zM87 109l-16-3M87 109H71M87 109l-16 3" />
              <path stroke-width=".8" d="M3 2l6.500 8L16 2M9.500 10v9M100 101l13 16M113 101l-13 16" />
            </g>
          </svg>
        </div>
        <div class="tabs">
          <div class="tab-nav">
            <button v-for="(d, i) in navs" :key="i" :aria-label="'布局导航 ' + (i + 1)">
              <svg viewBox="0 0 16 16"><path :d="d" /></svg>
            </button>
          </div>
          <button class="tab active">
            <svg viewBox="0 0 48 14" preserveAspectRatio="none"><path d="M0 0h48l-6 13H7z" /></svg>
            <span class="mono">Model</span>
          </button>
          <button class="tab"><svg viewBox="0 0 48 14" preserveAspectRatio="none"><path d="M0 13.500h37L43.500 0" /></svg><span>布局1</span></button>
          <button class="tab"><svg viewBox="0 0 48 14" preserveAspectRatio="none"><path d="M0 13.500h37L43.500 0" /></svg><span>布局2</span></button>
        </div>
        <section class="command">
          <span class="cmd-grip"></span>
          <div class="cmd-box">
            <div class="history">
              <p><span>加载自定义文件成功。自定义组：</span><span class="cour">EXPRESS</span></p>
              <p><span class="cour">AutoCAD&nbsp;</span><span>菜单实用程序已加载。</span></p>
            </div>
            <div class="prompt">
              <label for="cmd">命令:</label>
              <input id="cmd" v-model="command" type="text" />
              <div class="hscroll">
                <button aria-label="向左滚动"><svg viewBox="0 0 6 8"><path d="M5 1L1.500 4 5 7" /></svg></button>
                <span class="thumb"></span>
              </div>
            </div>
          </div>
        </section>
      </main>

      <aside class="dock">
        <div class="dock-head">
          <button aria-label="最小化面板"><svg viewBox="0 0 8 8"><path d="M1.500 4h5" /></svg></button>
          <span class="rails"></span>
          <button aria-label="关闭面板"><svg viewBox="0 0 8 8"><path d="M1.500 1.500l5 5M6.500 1.500l-5 5" /></svg></button>
        </div>
        <section v-for="p in panels" :key="p.id" class="panel" :class="{ tight: p.tight }">
          <svg class="emblem" viewBox="0 0 16 16" aria-hidden="true" v-html="icons[p.emblem]"></svg>
          <div class="panel-body">
            <div v-for="(row, i) in p.rows" :key="i" class="row">
              <button v-for="tool in row.tools" :key="tool.id" class="cell" :class="{ sep: tool.sep }" :aria-label="tool.label">
                <svg class="ic" viewBox="0 0 16 16" v-html="icons[tool.id]"></svg>
              </button>
              <button v-if="row.more" class="more" aria-label="更多"><svg viewBox="0 0 5 6"><path d="M0 0h5v1H0zM0 3h5L2.500 6z" /></svg></button>
            </div>

            <template v-if="p.id === 'layer'">
              <div class="row">
                <div class="combo short">
                  <select aria-label="图层状态"><option>未保存的图层状态</option></select>
                  <svg class="chev" viewBox="0 0 8 5"><path d="M.5.5L4 4 7.500.5" /></svg>
                </div>
                <button class="cell" aria-label="图层状态管理器"><svg class="ic" viewBox="0 0 16 16" v-html="icons.layerstate"></svg></button>
              </div>
              <div class="row">
                <button class="cell" aria-label="上一个图层"><svg class="ic" viewBox="0 0 16 16" v-html="icons.layerprev"></svg></button>
                <div class="combo long layers">
                  <select aria-label="图层" class="mono"><option>0</option></select>
                  <span class="states">
                    <svg v-for="n in ['bulb', 'sun', 'vpfreeze', 'lock']" :key="n" viewBox="0 0 16 16" v-html="icons[n]"></svg>
                    <i class="swatch"></i>
                  </span>
                  <svg class="chev" viewBox="0 0 8 5"><path d="M.5.5L4 4 7.500.5" /></svg>
                </div>
              </div>
            </template>

            <div v-if="styleCombos[p.id]" class="row">
              <div class="combo short">
                <select class="mono" :class="{ indent: styleCombos[p.id].indent }" :aria-label="p.id"><option>{{ styleCombos[p.id].value }}</option></select>
                <svg class="chev" viewBox="0 0 8 5"><path d="M.5.5L4 4 7.500.5" /></svg>
              </div>
              <button class="cell" aria-label="样式"><svg class="ic" viewBox="0 0 16 16" v-html="icons[styleCombos[p.id].icon]"></svg></button>
            </div>

            <div v-if="p.id === 'text'" class="row">
              <div class="combo long">
                <select class="ui" aria-label="文字高度"><option>2.5</option></select>
                <svg class="chev" viewBox="0 0 8 5"><path d="M.5.5L4 4 7.500.5" /></svg>
              </div>
            </div>

            <div v-if="p.id === 'nav'" class="row">
              <button class="cell" aria-label="上一视图"><svg class="ic" viewBox="0 0 16 16" v-html="icons.back"></svg></button>
              <div class="combo long off">
                <select disabled aria-label="视图"><option></option></select>
                <svg class="chev" viewBox="0 0 8 5"><path d="M.5.5L4 4 7.500.5" /></svg>
              </div>
            </div>
          </div>
        </section>
      </aside>
    </div>

    <footer class="status">
      <output class="coords mono">2567.6175, 3361.6705, 0.0000</output>
      <div class="toggles">
        <button v-for="g in toggles" :key="g.name" :class="{ on: g.on, mono: /^D/.test(g.name) }" :aria-pressed="g.on" @click="g.on = !g.on">{{ g.name }}</button>
      </div>
      <div class="tray">
        <button class="ratio">注释比例: <span class="mono">1:1</span><svg class="drop" viewBox="0 0 16 16" v-html="icons.tiny"></svg></button>
        <button class="ann" aria-label="注释可见性"><svg class="ic" viewBox="0 0 16 16" v-html="icons.annvis"></svg></button>
        <button class="ann" aria-label="自动缩放"><svg class="ic" viewBox="0 0 16 16" v-html="icons.annauto"></svg></button>
        <div class="notify">
          <button aria-label="性能"><svg class="ic" viewBox="0 0 16 16" v-html="icons.wrench"></svg></button>
          <button aria-label="锁定"><svg class="ic" viewBox="0 0 16 16" v-html="icons.padlock"></svg></button>
        </div>
        <button aria-label="状态栏菜单"><svg class="drop" viewBox="0 0 16 16" v-html="icons.tiny"></svg></button>
        <button aria-label="全屏显示"><svg class="ic" viewBox="0 0 16 16" v-html="icons.clean"></svg></button>
        <span class="sizer"></span>
      </div>
    </footer>

    <div v-if="balloonOpen" class="balloon" role="status">
      <div class="balloon-head">
        <svg class="info" viewBox="0 0 16 16" aria-hidden="true" v-html="icons.info"></svg>
        <strong>性能调节器</strong>
        <button aria-label="关闭" @click="balloonOpen = false"><svg viewBox="0 0 8 8"><path d="M0 1l8 6M8 1L0 7" /></svg></button>
      </div>
      <p class="dense">性能调节器已经分析了图形卡及驱动程序，<br />将为三维功能提供优化的三维图形显示。</p>
      <p><a href="#results">单击以查看结果。</a></p>
      <p class="last">要手动调整设置，请输入 <span class="mono">3dconfig</span>。</p>
      <svg class="tail" viewBox="0 0 18 20"><path fill="#ffffe1" d="M0 0h17v18z" /><path fill="none" stroke="#222" d="M0 1l17 18V1" /></svg>
    </div>
  </div>
</template>

<style>
body {
  margin: 0;
  background: #f0f0f0;
}
</style>

<style scoped>
* {
  box-sizing: border-box;
}
.window {
  position: relative;
  display: flex;
  flex-direction: column;
  min-height: 100vh;
  border-top: 1px solid #2b88d8;
  border-bottom: 1px solid #3b8fd6;
  background: #f0f0f0;
  color: #000;
  font-family: 'Noto Sans CJK SC', sans-serif;
  font-size: 11px;
  line-height: 14px;
}
button {
  display: flex;
  align-items: center;
  justify-content: center;
  padding: 0;
  border: 0;
  background: none;
  color: inherit;
  font: inherit;
}
input,
select {
  color: inherit;
  font: inherit;
}
p,
h1 {
  margin: 0;
}
.ic {
  display: block;
  flex: none;
  width: 15px;
  height: 15px;
}
.drop {
  flex: none;
  width: 10px;
  height: 10px;
}
.mono {
  font-family: 'DejaVu Sans Mono', monospace;
  font-size: 9px;
}

.titlebar {
  display: flex;
  align-items: center;
  gap: 5px;
  height: 26px;
  padding-left: 6px;
  background: #fff;
}
.titlebar .ic,
.menubar > .ic {
  width: 14px;
  height: 14px;
}
.titlebar h1 {
  flex: 1;
  font-family: 'Open Sans', sans-serif;
  font-size: 11px;
  font-weight: 400;
}
.caption {
  display: flex;
}
.caption button {
  width: 41px;
  height: 26px;
}
.caption svg {
  width: 10px;
  height: 10px;
  fill: none;
  stroke: #222;
}

.menubar {
  display: flex;
  align-items: center;
  height: 18px;
  padding: 0 2px 0 6px;
  background: #fff;
}
.menus {
  display: flex;
  flex: 1;
  gap: 13px;
  padding-left: 6px;
  font-family: 'Open Sans', 'Noto Sans CJK SC', sans-serif;
}
.menus button {
  white-space: nowrap;
}
.ask {
  width: 242px;
  height: 16px;
  padding: 0 2px;
  border: 1px solid #8a8a8a;
  border-right: 0;
  border-bottom-color: #ddd;
  background: #fff;
  font-family: 'DejaVu Sans Mono', monospace;
  font-size: 9px;
}
.ask::placeholder {
  color: #666;
  opacity: 1;
}
.infocenter {
  display: flex;
  height: 16px;
  margin-right: 3px;
  border: 1px solid #9a9a9a;
  border-radius: 3px;
  background: linear-gradient(#fff, #dcdcdc);
}
.infocenter button {
  width: 16px;
  border-left: 1px solid #aaa;
}
.infocenter .wide {
  width: 25px;
  border-left: 0;
}
.infocenter .ic {
  width: 12px;
  height: 12px;
}
.infocenter .drop {
  width: 8px;
  height: 8px;
}
.mdi {
  display: flex;
  gap: 3px;
}
.mdi button {
  width: 14px;
  height: 14px;
  border: 1px solid #e4e4e4;
}
.mdi svg {
  width: 8px;
  height: 8px;
  fill: none;
  stroke: #5a7086;
}

.toolbars {
  display: flex;
  height: 27px;
  padding-top: 2px;
  border-bottom: 1px solid #777;
}
.bar {
  display: flex;
  align-items: center;
  height: 24px;
  padding-right: 3px;
  padding-left: 4px;
  border-right: 1px solid #a0a0a0;
  border-bottom: 1px solid #c4c4c4;
}
.grip {
  width: 5px;
  height: 20px;
  margin-right: 2px;
  border-right: 1px solid #aaa;
  border-left: 1px solid #aaa;
}
.group {
  display: flex;
  align-items: center;
}
.group + .group {
  padding-left: 4px;
  border-left: 1px solid #333;
  height: 16px;
}
.tool {
  width: 21px;
  height: 20px;
}
.tool.hot {
  border: 1px solid #cce4f7;
  background: #d9eafa;
}
.tool-drop {
  width: 11px;
}
.tool-drop svg {
  width: 5px;
  height: 3px;
  fill: #1d2f8a;
}
.tool-drop.dim {
  opacity: 0.3;
}

.combo {
  position: relative;
  height: 20px;
}
.combo select {
  display: block;
  width: 100%;
  height: 100%;
  padding: 0 16px 0 3px;
  border: 1px solid #8c8c8c;
  border-radius: 0;
  background: #fff;
  appearance: none;
}
.combo select.indent {
  padding-left: 15px;
}
.combo select.ui {
  font-family: 'Open Sans', sans-serif;
}
.combo.workspace {
  width: 157px;
}
.combo.workspace select {
  padding-left: 6px;
}
.combo.short {
  width: 135px;
}
.combo.long {
  width: 155px;
}
.chev {
  position: absolute;
  top: 8px;
  right: 4px;
  width: 8px;
  height: 5px;
  fill: none;
  stroke: #555;
  pointer-events: none;
}
.combo.layers select {
  padding-left: 76px;
}
.states {
  position: absolute;
  top: 3px;
  left: 4px;
  display: flex;
  align-items: center;
  gap: 1px;
  pointer-events: none;
}
.states svg {
  width: 14px;
  height: 14px;
}
.swatch {
  width: 9px;
  height: 9px;
  border: 1px solid #222;
  background: #fff;
}
.combo.off select {
  border-color: #ccc;
  background: #f0f0f0;
}
.combo.off::after {
  content: '';
  position: absolute;
  top: 1px;
  right: 1px;
  width: 15px;
  height: 18px;
  background: #fff;
}
.combo.off .chev {
  z-index: 1;
  stroke: #aaa;
}

.workspace-area {
  display: flex;
  flex: 1;
}
.left {
  display: flex;
  flex: 1;
  flex-direction: column;
  min-width: 0;
}
.canvas {
  position: relative;
  flex: 1;
  min-height: 300px;
  border-left: 1px solid #666;
  background: #000;
}
.handle {
  position: absolute;
  top: 1px;
  right: 139px;
  width: 7px;
  height: 4px;
  border: 1px solid #ccc;
}
.ucs {
  position: absolute;
  bottom: 146px;
  left: 330px;
  width: 114px;
  height: 118px;
}
.tabs {
  display: flex;
  height: 16px;
  border-top: 1px solid #666;
  border-bottom: 2px solid #fff;
}
.tab-nav {
  display: flex;
  margin-left: 2px;
}
.tab-nav button {
  width: 12px;
  height: 13px;
  border-right: 1px solid #999;
}
.tab-nav button:last-child {
  width: 14px;
}
.tab-nav svg {
  width: 9px;
  height: 9px;
  fill: #555;
  stroke: #555;
}
.tab {
  position: relative;
  width: 41px;
  height: 13px;
  line-height: 12px;
}
.tab svg {
  position: absolute;
  top: 0;
  left: 0;
  width: 48px;
  height: 13px;
  fill: none;
  stroke: #555;
}
.tab.active {
  width: 44px;
}
.tab.active svg {
  fill: #000;
}
.tab span {
  position: relative;
}
.tab.active span {
  color: #fff;
}
.command {
  display: flex;
  margin-top: 3px;
  padding-top: 7px;
  border-top: 2px solid #808080;
}
.cmd-grip {
  width: 8px;
  height: 48px;
  margin: 0 2px 0 4px;
  border: 1px solid #b5b5b5;
  border-width: 0 1px 1px;
}
.cmd-box {
  flex: 1;
  margin-bottom: 1px;
  border: 1px solid #b5b5b5;
  border-top: 2px solid #777;
  border-left: 1px solid #777;
  border-right: 0;
  background: #fff;
  font-size: 14px;
}
.cour {
  font-family: 'Liberation Mono', monospace;
  font-size: 12px;
}
.history {
  height: 33px;
  padding-left: 1px;
  border-bottom: 1px solid #aaa;
}
.history p {
  display: flex;
  align-items: baseline;
  height: 14px;
}
.prompt {
  display: flex;
  align-items: center;
  height: 18px;
  padding-left: 1px;
}
.prompt input {
  flex: 1;
  min-width: 0;
  height: 16px;
  padding: 0 4px;
  border: 0;
  outline: 0;
}
.hscroll {
  display: flex;
  align-items: center;
  width: 82px;
  height: 100%;
  background: #f0f0f0;
}
.hscroll button {
  width: 17px;
}
.hscroll svg {
  width: 6px;
  height: 8px;
  fill: none;
  stroke: #333;
  stroke-width: 1.5;
}
.thumb {
  width: 15px;
  height: 14px;
  background: #cdcdcd;
}

.dock {
  flex: none;
  width: 217px;
  padding-left: 3px;
  border-left: 5px solid #f6f6f6;
  background: linear-gradient(#999, #999) left / 2px 100% no-repeat #ebebeb;
}
.dock-head {
  display: flex;
  align-items: center;
  gap: 4px;
  height: 18px;
  padding: 2px 5px 0 8px;
}
.dock-head button {
  width: 9px;
  height: 9px;
  border: 1px solid #aaa;
}
.dock-head svg {
  flex: none;
  width: 8px;
  height: 8px;
  stroke: #000;
  stroke-width: 1.6;
}
.rails {
  flex: 1;
  height: 6px;
  border: 1px solid #999;
  border-left: 0;
  background: #fff;
}
.panel {
  display: flex;
  padding: 4px 4px 4px 6px;
  border-top: 1px solid #b0b0b8;
  background: linear-gradient(#d9d9d9, #d9d9d9) 2px 0 / 20px 100% no-repeat;
}
.panel:last-child {
  border-bottom: 1px solid #b0b0b8;
}
.emblem {
  flex: none;
  width: 20px;
  height: 20px;
}
.panel-body {
  display: flex;
  flex: 1;
  flex-direction: column;
  align-items: flex-end;
  gap: 3px;
}
.tight .panel-body {
  gap: 2px;
}
.row {
  display: flex;
  height: 20px;
}
.cell {
  width: 20px;
  height: 20px;
}
.cell.sep {
  width: 21px;
  margin-left: 1px;
  border-left: 1px solid #777;
}
.more {
  align-items: flex-end;
  width: 5px;
}
.more svg {
  width: 5px;
  height: 6px;
}

.status {
  display: flex;
  align-items: center;
  height: 20px;
  padding: 2px 3px 0;
}
.coords {
  width: 168px;
  height: 16px;
  padding-left: 1px;
  border: 1px solid #bbb;
  border-top-color: #888;
}
.toggles {
  display: flex;
  gap: 5px;
  padding-left: 5px;
}
.toggles button {
  min-width: 20px;
  height: 17px;
  border: 1px solid #fafafa;
  border-right-color: #888;
  border-bottom-color: #bbb;
}
.toggles button.on {
  border: 1px solid #222;
  border-right-color: #fafafa;
  border-bottom-color: #fafafa;
}
.tray {
  display: flex;
  flex: 1;
  align-items: center;
  justify-content: flex-end;
  gap: 5px;
}
.ratio {
  gap: 2px;
}
.ratio .mono {
  padding-left: 6px;
}
.ann {
  width: 18px;
}
.notify {
  display: flex;
  gap: 4px;
  height: 17px;
  padding: 0 3px;
  border: 1px solid #bbb;
}
.sizer {
  width: 8px;
  height: 12px;
  background: repeating-linear-gradient(135deg, #bbb 0 1px, transparent 1px 3px);
  clip-path: polygon(100% 0, 100% 100%, 0 100%);
}

.balloon {
  position: absolute;
  right: 24px;
  bottom: 27px;
  width: 231px;
  min-height: 94px;
  padding: 5px 8px 4px 13px;
  border: 1px solid #222;
  border-radius: 16px;
  background: #ffffe1;
  white-space: nowrap;
}
.balloon-head {
  display: flex;
  align-items: center;
  gap: 9px;
  height: 19px;
  margin: 0 -1px 3px -5px;
}
.info {
  width: 14px;
  height: 14px;
}
.balloon strong {
  flex: 1;
  font-size: 12px;
}
.balloon-head button {
  width: 14px;
  height: 14px;
  border: 1px solid #777;
  background: #f0f0e4;
}
.balloon-head button svg {
  width: 8px;
  height: 8px;
  stroke: #000;
  stroke-width: 2;
}
.dense {
  line-height: 11px;
}
.balloon a {
  color: #00f;
}
.balloon p + p {
  margin-top: 3px;
}
.balloon p.last {
  margin-top: 5px;
}
.tail {
  position: absolute;
  top: 100%;
  right: 54px;
  width: 18px;
  height: 20px;
  margin-top: -1px;
}
</style>
